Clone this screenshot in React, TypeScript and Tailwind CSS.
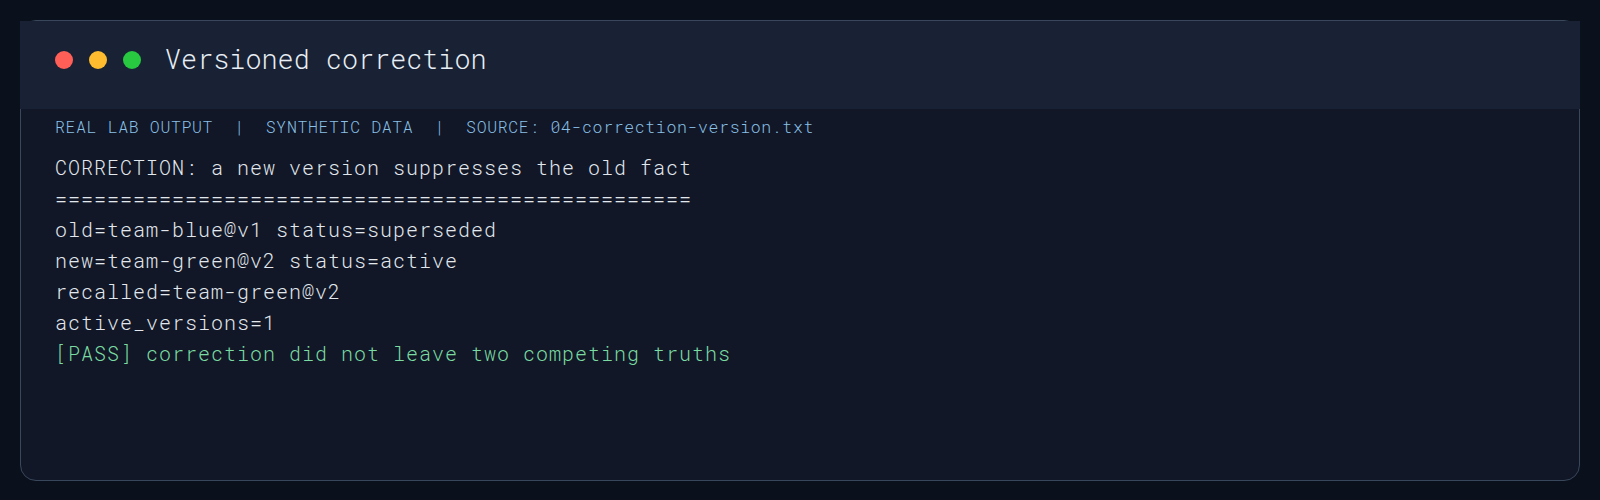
const lines = [
  { text: 'CORRECTION: a new version suppresses the old fact', tone: 'plain' },
  { text: '=================================================', tone: 'plain' },
  { text: 'old=team-blue@v1 status=superseded', tone: 'plain' },
  { text: 'new=team-green@v2 status=active', tone: 'plain' },
  { text: 'recalled=team-green@v2', tone: 'plain' },
  { text: 'active_versions=1', tone: 'plain' },
  { text: '[PASS] correction did not leave two competing truths', tone: 'pass' },
];

export default function App() {
  return (
    <div className="min-h-[500px] bg-[#0b111c] p-5 font-['Roboto_Mono','DejaVu_Sans_Mono',monospace]">
      <div className="h-[461px] rounded-2xl border border-[#38475b] bg-[#111726]">
        {/* Header */}
        <div className="-mx-px h-[88px] bg-[#182234] pl-[35px] pt-[25px]">
          <div className="flex h-7 items-center">
            <span className="h-[18px] w-[18px] rounded-full bg-[#ff5f57]" />
            <span className="ml-[16px] h-[18px] w-[18px] rounded-full bg-[#febc2e]" />
            <span className="ml-[16px] h-[18px] w-[18px] rounded-full bg-[#28c840]" />
            <span className="ml-[24px] pb-[3px] text-[26.8px] font-light leading-7 text-[#e8eef5]">
              Versioned correction
            </span>
          </div>
        </div>

        {/* Output */}
        <div className="px-[34px] pt-[6px]">
          <div className="whitespace-pre text-[16.5px] font-light leading-6 tracking-[0.64px] text-[#8ac0e6]">
            REAL LAB OUTPUT  |  SYNTHETIC DATA  |  SOURCE: 04-correction-version.txt
          </div>
          <div className="mt-[13px] text-[20px] font-light leading-[31px] tracking-[1px]">
            {lines.map((l) => (
              <div key={l.text} className={l.tone === 'pass' ? 'text-[#7adba2]' : 'text-[#e3e8ee]'}>
                {l.text}
              </div>
            ))}
          </div>
        </div>
      </div>
    </div>
  );
}
